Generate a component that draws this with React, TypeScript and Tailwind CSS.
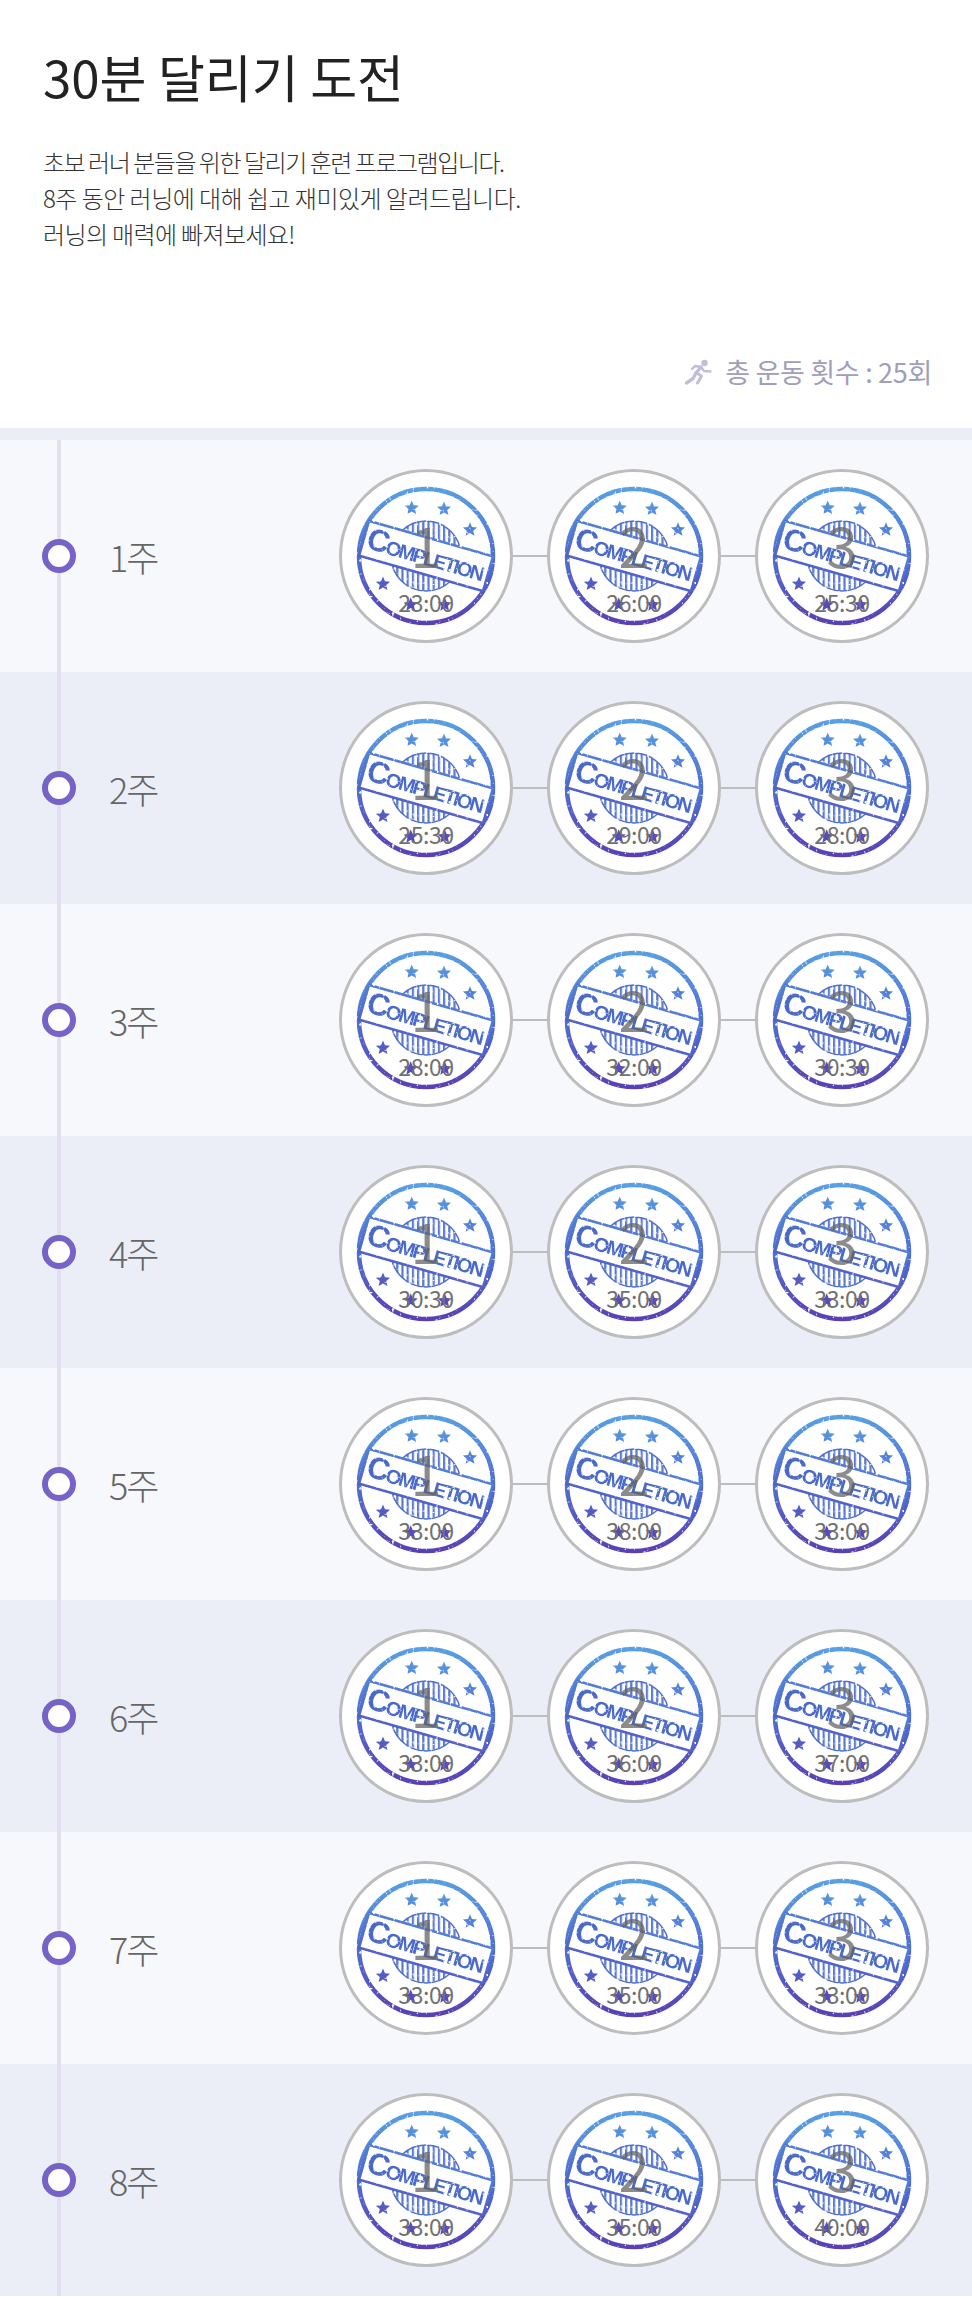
import React from 'react'

const weeks = [
  ['23:00', '26:00', '25:30'],
  ['25:30', '29:00', '28:00'],
  ['28:00', '32:00', '30:30'],
  ['30:30', '35:00', '33:00'],
  ['33:00', '38:00', '33:00'],
  ['33:00', '36:00', '37:00'],
  ['33:00', '35:00', '33:00'],
  ['33:00', '35:00', '40:00'],
]

const stars = [
  [72.7, 39],
  [105, 40],
  [131, 60.7],
  [44, 115],
  [71.7, 135.7],
  [105.7, 135.7],
]

const starPoints = (cx: number, cy: number, r: number) =>
  Array.from({ length: 10 }, (_, i) => {
    const radius = i % 2 === 0 ? r : r * 0.45
    const angle = (Math.PI / 5) * i - Math.PI / 2
    return `${cx + radius * Math.cos(angle)},${cy + radius * Math.sin(angle)}`
  }).join(' ')

const RunnerIcon = () => (
  <svg viewBox="0 0 28 26" className="h-[26px] w-[28px] text-[#c0bedb]" fill="none" stroke="currentColor" strokeLinecap="round" strokeLinejoin="round">
    <circle cx="19.5" cy="4" r="3.2" fill="currentColor" stroke="none" />
    <path d="M1.5 24 L8 19.5 L11 14 L16 8" strokeWidth="3.4" />
    <path d="M11 13.5 L16.5 17 L12.5 24" strokeWidth="3" />
    <path d="M16 8 L10 7 L7 10" strokeWidth="2.4" />
    <path d="M16 8 L19 12 L25.5 12.5" strokeWidth="2.4" />
  </svg>
)

const StampDefs = () => (
  <svg className="absolute h-0 w-0" aria-hidden="true">
    <defs>
      <linearGradient id="stampInk" gradientUnits="userSpaceOnUse" x1="87" y1="18" x2="87" y2="156">
        <stop offset="0" stopColor="#5aa0e4" />
        <stop offset="0.5" stopColor="#4f6fd0" />
        <stop offset="1" stopColor="#5a3fb4" />
      </linearGradient>
      <pattern id="stampHatch" patternUnits="userSpaceOnUse" width="5.2" height="5.2">
        <rect width="2.2" height="5.2" fill="#5a78d4" />
      </pattern>
      <filter id="stampWorn" filterUnits="userSpaceOnUse" x="0" y="0" width="174" height="174">
        <feTurbulence type="fractalNoise" baseFrequency="0.3" numOctaves="2" seed="4" result="noise" />
        <feColorMatrix
          in="noise"
          type="matrix"
          values="0 0 0 0 0  0 0 0 0 0  0 0 0 0 0  0 0 0 -6 4.8"
          result="holes"
        />
        <feComposite in="SourceGraphic" in2="holes" operator="in" />
        <feGaussianBlur stdDeviation="0.4" />
      </filter>
    </defs>
  </svg>
)

const Stamp = () => (
  <svg viewBox="0 0 174 174" className="absolute -inset-[3px] h-[174px] w-[174px]">
    <g filter="url(#stampWorn)">
      <circle cx="87" cy="87" r="67" fill="none" stroke="url(#stampInk)" strokeWidth="4.5" />
      <circle cx="87" cy="87" r="35" fill="url(#stampHatch)" stroke="#4f6fd0" strokeWidth="1.5" />
      {stars.map(([cx, cy]) => (
        <polygon key={`${cx}-${cy}`} points={starPoints(cx, cy, 7.5)} fill="url(#stampInk)" />
      ))}
      <g transform="rotate(16 87 87)">
        <rect x="22.5" y="69" width="129" height="36" fill="#fff" stroke="url(#stampInk)" strokeWidth="2.6" />
        <text
          x="87"
          y="96"
          textAnchor="middle"
          textLength="122"
          fill="#4a6ac8"
          className="font-['Liberation_Sans',sans-serif] text-[20px] font-bold"
        >
          <tspan className="text-[31px]">C</tspan>OMPLETION
        </text>
      </g>
    </g>
  </svg>
)

const Badge = ({ index, time }: { index: number; time: string }) => (
  <div className="relative h-[174px] w-[174px] shrink-0 rounded-full border-[3px] border-[#bdbdbd] bg-white">
    <Stamp />
    <span className="absolute inset-x-0 top-[42px] text-center text-[56px] leading-[60px] text-[#666]/75">
      {index}
    </span>
    <span className="absolute inset-x-0 top-[117px] text-center text-[23px] leading-[26px] tracking-[-0.4px] text-[#707070]">
      {time}
    </span>
  </div>
)

const WeekRow = ({ week, times }: { week: number; times: string[] }) => (
  <li className={`relative flex h-[232px] items-center ${week % 2 === 1 ? 'bg-[#f6f8fc]' : 'bg-[#ebeef7]'}`}>
    <div className="absolute inset-y-0 left-[57px] w-1 bg-[#e1dff0]" />
    <div className="relative ml-[42px] h-[34px] w-[34px] rounded-full border-[6px] border-[#7763c8] bg-white" />
    <span className="ml-[33px] text-[36px] font-light leading-none tracking-[-2px] text-[#666]">{week}주</span>
    <div className="ml-auto mr-[43px] flex items-center">
      {times.map((time, i) => (
        <React.Fragment key={i}>
          {i > 0 && <div className="h-[2px] w-[34px] bg-[#bdbdbd]" />}
          <Badge index={i + 1} time={time} />
        </React.Fragment>
      ))}
    </div>
  </li>
)

export default function App() {
  return (
    <div className="relative h-[2297px] w-[972px] overflow-hidden bg-white font-['Noto_Sans_CJK_KR','Noto_Sans',sans-serif]">
      <StampDefs />
      <header className="flex h-[428px] flex-col pl-[43px] pr-[40px] pt-[39px]">
        <h1 className="text-[51px] font-normal leading-[74px] text-[#222]">30분 달리기 도전</h1>
        <p className="mt-[31px] text-[24px] font-light leading-[36px] text-[#333]">
          <span className="tracking-[-1.46px]">초보 러너 분들을 위한 달리기 훈련 프로그램입니다.</span>
          <br />
          <span className="tracking-[-0.52px]">8주 동안 러닝에 대해 쉽고 재미있게 알려드립니다.</span>
          <br />
          <span className="tracking-[-0.63px]">러닝의 매력에 빠져보세요!</span>
        </p>
        <div className="ml-auto mt-[100px] flex items-center gap-[12px] text-[#a09eba]">
          <RunnerIcon />
          <span className="text-[27px] leading-[40px] tracking-[-0.3px]">총 운동 횟수 : 25회</span>
        </div>
      </header>
      <div className="h-3 bg-[#ebeef7]" />
      <ul>
        {weeks.map((times, i) => (
          <WeekRow key={i} week={i + 1} times={times} />
        ))}
      </ul>
    </div>
  )
}
